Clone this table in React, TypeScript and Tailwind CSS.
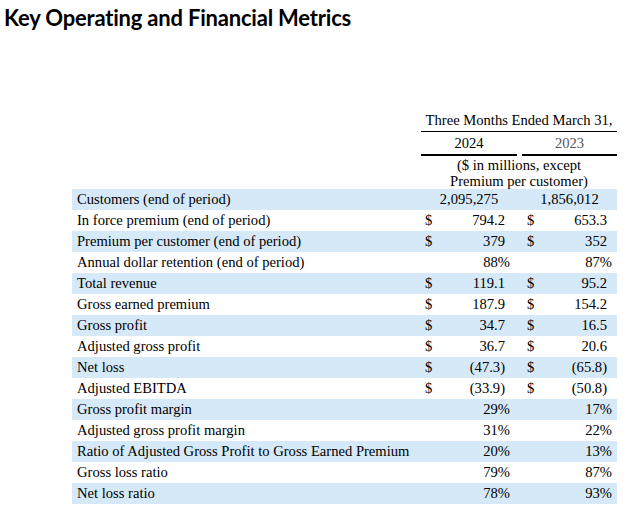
import React from 'react';

type Row = {
  label: string;
  a: string;
  b: string;
  kind: 'center' | 'dollar' | 'pct';
};

const ROWS: Row[] = [
  { label: 'Customers (end of period)', a: '2,095,275', b: '1,856,012', kind: 'center' },
  { label: 'In force premium (end of period)', a: '794.2', b: '653.3', kind: 'dollar' },
  { label: 'Premium per customer (end of period)', a: '379', b: '352', kind: 'dollar' },
  { label: 'Annual dollar retention (end of period)', a: '88%', b: '87%', kind: 'pct' },
  { label: 'Total revenue', a: '119.1', b: '95.2', kind: 'dollar' },
  { label: 'Gross earned premium', a: '187.9', b: '154.2', kind: 'dollar' },
  { label: 'Gross profit', a: '34.7', b: '16.5', kind: 'dollar' },
  { label: 'Adjusted gross profit', a: '36.7', b: '20.6', kind: 'dollar' },
  { label: 'Net loss', a: '(47.3)', b: '(65.8)', kind: 'dollar' },
  { label: 'Adjusted EBITDA', a: '(33.9)', b: '(50.8)', kind: 'dollar' },
  { label: 'Gross profit margin', a: '29%', b: '17%', kind: 'pct' },
  { label: 'Adjusted gross profit margin', a: '31%', b: '22%', kind: 'pct' },
  { label: 'Ratio of Adjusted Gross Profit to Gross Earned Premium', a: '20%', b: '13%', kind: 'pct' },
  { label: 'Gross loss ratio', a: '79%', b: '87%', kind: 'pct' },
  { label: 'Net loss ratio', a: '78%', b: '93%', kind: 'pct' },
];

function Cell({ value, kind, col }: { value: string; kind: Row['kind']; col: 1 | 2 }) {
  if (kind === 'center') {
    return <div className="flex items-center justify-center">{value}</div>;
  }
  if (kind === 'pct') {
    return (
      <div className={col === 1 ? 'flex items-center justify-end pr-[7px]' : 'flex items-center justify-end pr-[5px]'}>
        {value}
      </div>
    );
  }
  return (
    <div className={col === 1 ? 'flex items-center justify-between pl-[4px] pr-[12px]' : 'flex items-center justify-between pl-[5px] pr-[10px]'}>
      <span>$</span>
      <span>{value}</span>
    </div>
  );
}

export default function App() {
  return (
    <div className="w-[640px] h-[517px] bg-white overflow-hidden text-black">
      <h1 className="pl-[4px] pt-[3px] text-[22px] leading-[30px] font-bold font-['Lato',sans-serif] tracking-[-0.2px]">
        Key Operating and Financial Metrics
      </h1>

      <div className="ml-[72px] mt-[77px] w-[545px] font-['Liberation_Serif',serif] text-[14.6px] leading-[21px]">
        {/* header */}
        <div className="grid grid-cols-[349px_196px]">
          <div />
          <div className="border-b border-black text-center h-[22px] whitespace-nowrap">Three Months Ended March 31,</div>
        </div>
        <div className="grid grid-cols-[349px_96px_5px_95px]">
          <div />
          <div className="border-b-2 border-black text-center h-[24px] leading-[23px]">2024</div>
          <div />
          <div className="border-b-2 border-black text-center h-[24px] leading-[23px] text-[#555]">2023</div>
        </div>
        <div className="grid grid-cols-[349px_196px]">
          <div />
          <div className="text-center leading-[16px] pt-[1px] h-[33px] whitespace-nowrap">
            ($ in millions, except
            <br />
            Premium per customer)
          </div>
        </div>

        {/* body */}
        {ROWS.map((r, i) => (
          <div
            key={r.label}
            className={`grid grid-cols-[349px_96px_5px_95px] h-[21px] ${i % 2 === 0 ? 'bg-[#d5e9f8]' : 'bg-white'}`}
          >
            <div className="pl-[5px] whitespace-nowrap">{r.label}</div>
            <Cell value={r.a} kind={r.kind} col={1} />
            <div />
            <Cell value={r.b} kind={r.kind} col={2} />
          </div>
        ))}
      </div>
    </div>
  );
}
